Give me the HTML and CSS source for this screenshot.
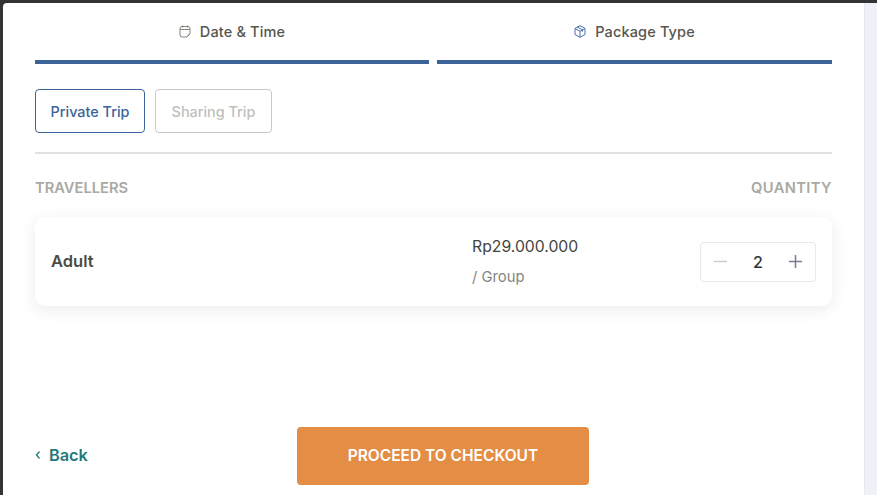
FILE: index.html
```html
<!DOCTYPE html>
<html lang="en">
<head>
<meta charset="utf-8">
<title>Package Type</title>
<link rel="stylesheet" href="styles.css">
</head>
<body>
<div class="page">
  <main class="modal">
    <nav class="tabs">
      <div class="tab tab-first">
        <div class="tab-label">
          <svg class="tab-icon" viewBox="0 0 12 13" fill="none" stroke="#77776f" stroke-width="0.9"><path d="M3.6 .5v2M8.4 .5v2M1 4.500h10M7.500 12H3a2 2 0 0 1-2-2V3.500a2 2 0 0 1 2-2h6a2 2 0 0 1 2 2v5.500z"/><path d="M7.800 11.800l3.200-2.800"/></svg>
          <span>Date &amp; Time</span>
        </div>
        <div class="tab-line"></div>
      </div>
      <div class="tab">
        <div class="tab-label">
          <svg class="tab-icon" viewBox="0 0 12 13" fill="none" stroke="#3f6aa8" stroke-width="0.950"><path d="M6 .7l5 2.700v6.200l-5 2.700-5-2.700V3.400z"/><path d="M1.200 3.600L6 6.300l4.800-2.700M6 6.300v6M3.500 2.100l5 2.800v1.800"/></svg>
          <span>Package Type</span>
        </div>
        <div class="tab-line"></div>
      </div>
    </nav>
    <div class="trip-types">
      <button class="trip trip-active">Private Trip</button>
      <button class="trip trip-muted">Sharing Trip</button>
    </div>
    <hr class="divider">
    <div class="headers">
      <span>TRAVELLERS</span>
      <span class="qty">QUANTITY</span>
    </div>
    <section class="card">
      <div class="who">Adult</div>
      <div class="price">
        <div class="amount">Rp29.000.000</div>
        <div class="unit">/ Group</div>
      </div>
      <div class="stepper">
        <svg class="step" viewBox="0 0 16 16" stroke="#c9c8d6" stroke-width="1.500"><path d="M1 8h14"/></svg>
        <span class="count">2</span>
        <svg class="step" viewBox="0 0 16 16" stroke="#7d7899" stroke-width="1.600"><path d="M1 8h14M8 1v14"/></svg>
      </div>
    </section>
    <footer class="footer">
      <a class="back" href="#">
        <svg class="chev" viewBox="0 0 6 10" fill="none" stroke="#1f7a7a" stroke-width="1.300"><path d="M4.500 1.500L1.500 5l3 3.500"/></svg>
        <span>Back</span>
      </a>
      <button class="checkout">PROCEED TO CHECKOUT</button>
    </footer>
  </main>
  <aside class="side"></aside>
</div>
</body>
</html>
```
FILE: styles.css
```css
* { box-sizing: border-box; }
html, body { margin: 0; height: 100%; }
body {
  font-family: Inter, "Noto Sans", "Liberation Sans", sans-serif;
  background: #333333;
  overflow: hidden;
}
.page {
  display: flex;
  height: 495px;
  padding: 3px 0 0 3px;
}
.modal {
  width: 861px;
  background: #ffffff;
  border-top-left-radius: 4px;
  padding: 0 32px 0 32px;
  display: flex;
  flex-direction: column;
}
.side { flex: 1; background: #eef1f7; border-left: 1px solid #e6e9f0; }

.tabs { display: flex; gap: 8px; }
.tab { flex: 1; }
.tab-first { flex: 0 0 394px; }
.tab-label {
  height: 57px;
  display: flex;
  align-items: center;
  justify-content: center;
  gap: 9px;
  font-size: 14.500px;
  letter-spacing: 0.15px;
  font-weight: 500;
  color: #56564f;
}
.tab-icon { width: 12px; height: 13px; }
.tab-line { height: 4px; background: #3c6499; }

.trip-types { display: flex; gap: 10px; margin-top: 25px; }
.trip {
  height: 44px;
  background: #fff;
  border-radius: 4px;
  font-family: inherit;
  font-size: 14.400px;
  font-weight: 500;
  padding: 0;
}
.trip-active { width: 110px; border: 1px solid #3c6499; color: #3c6499; }
.trip-muted { width: 117px; border: 1px solid #c8c8c8; color: #c0c0bc; }

.divider { width: 100%; height: 2px; margin: 19px 0 0; border: 0; background: #e1e1e1; }

.headers {
  display: flex;
  justify-content: space-between;
  margin-top: 24px;
  font-size: 14.700px;
  line-height: 20px;
  font-weight: 600;
  color: #a9a9a3;
}
.qty { letter-spacing: 0.4px; }

.card {
  height: 89px;
  margin-top: 19px;
  padding: 0 16px;
  border-radius: 10px;
  background: #fff;
  box-shadow: 0 4px 16px rgba(40, 40, 60, 0.09);
  display: flex;
  align-items: center;
}
.who { width: 421px; padding-bottom: 2px; font-size: 16.500px; font-weight: 600; color: #4b4b45; }
.price { flex: 1; }
.amount { font-size: 15.750px; line-height: 20px; font-weight: 400; color: #44443f; }
.unit { margin-top: 10px; font-size: 14.800px; line-height: 20px; color: #85857f; }
.stepper {
  width: 116px;
  height: 40px;
  border: 1px solid #e8e8ee;
  border-radius: 4px;
  padding: 0 12px;
  display: flex;
  align-items: center;
  justify-content: space-between;
}
.step { width: 15px; height: 15px; }
.count { font-size: 16px; font-weight: 500; color: #333; }

.footer {
  display: flex;
  align-items: center;
  gap: 208px;
  margin-top: 121px;
}
.back {
  display: flex;
  align-items: center;
  gap: 8px;
  width: 54px;
  padding-bottom: 2px;
  font-size: 16.300px;
  font-weight: 600;
  color: #1f7a7a;
  text-decoration: none;
}
.chev { width: 6px; height: 10px; }
.checkout {
  width: 292px;
  height: 58px;
  border: 0;
  border-radius: 4px;
  background: #e48d45;
  color: #fff;
  font-family: inherit;
  font-size: 15.500px;
  font-weight: 600;
  padding: 0 0 2px;
}
```
